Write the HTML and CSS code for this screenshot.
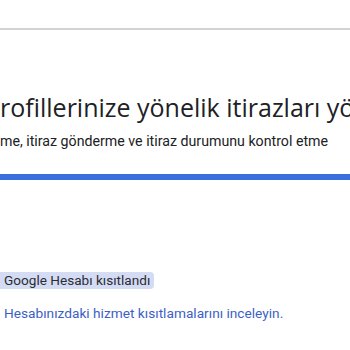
FILE: index.html
```html
<!DOCTYPE html>
<html lang="tr">
<head>
    <meta charset="UTF-8">
    <meta name="viewport" content="width=device-width, initial-scale=1.0">
    <title>İtirazlar</title>
    <link rel="stylesheet" href="styles.css">
</head>
<body>
    <div class="page">
        <div class="top-rule"></div>

        <!-- Page header -->
        <div class="header">
            <h1 class="title">rofillerinize yönelik itirazları yö</h1>
            <p class="subtitle">me, itiraz gönderme ve itiraz durumunu kontrol etme</p>
        </div>

        <div class="progress"></div>

        <!-- Restriction item -->
        <div class="item">
            <span class="chip">Google Hesabı kısıtlandı</span>
            <a class="link" href="#">Hesabınızdaki hizmet kısıtlamalarını inceleyin.</a>
        </div>
    </div>
</body>
</html>
```

FILE: styles.css
```css
/* Global styles */
html, body {
    margin: 0;
    padding: 0;
    background-color: #fff;
    overflow: hidden;
}

.page {
    width: 350px;
    height: 350px;
    overflow: hidden;
    font-family: Roboto, Arial, sans-serif;
}

.top-rule {
    height: 2px;
    margin-top: 28px;
    background-color: #d3d3d3;
}

/* Header */
.header {
    padding-top: 60px;
    white-space: nowrap;
}

.title {
    margin: 0;
    font-family: "Open Sans", sans-serif;
    font-size: 25px;
    font-weight: 400;
    line-height: 34px;
    color: #202124;
}

.subtitle {
    margin: 7px 0 0;
    font-size: 14.2px;
    line-height: 20px;
    color: #202124;
}

.progress {
    height: 6px;
    margin-top: 23px;
    background-color: #3c6fde;
}

/* Restriction item */
.item {
    display: flex;
    flex-direction: column;
    align-items: flex-start;
    gap: 14px;
    padding-top: 92px;
    white-space: nowrap;
}

.chip {
    padding: 1px 4px;
    font-size: 13.6px;
    line-height: 15px;
    color: #2c2c34;
    background-color: #d4dcf4;
    border-radius: 0 4px 4px 0;
}

.link {
    padding-left: 4px;
    font-size: 13.7px;
    line-height: 20px;
    color: #3c5fc4;
    text-decoration: none;
}
```
